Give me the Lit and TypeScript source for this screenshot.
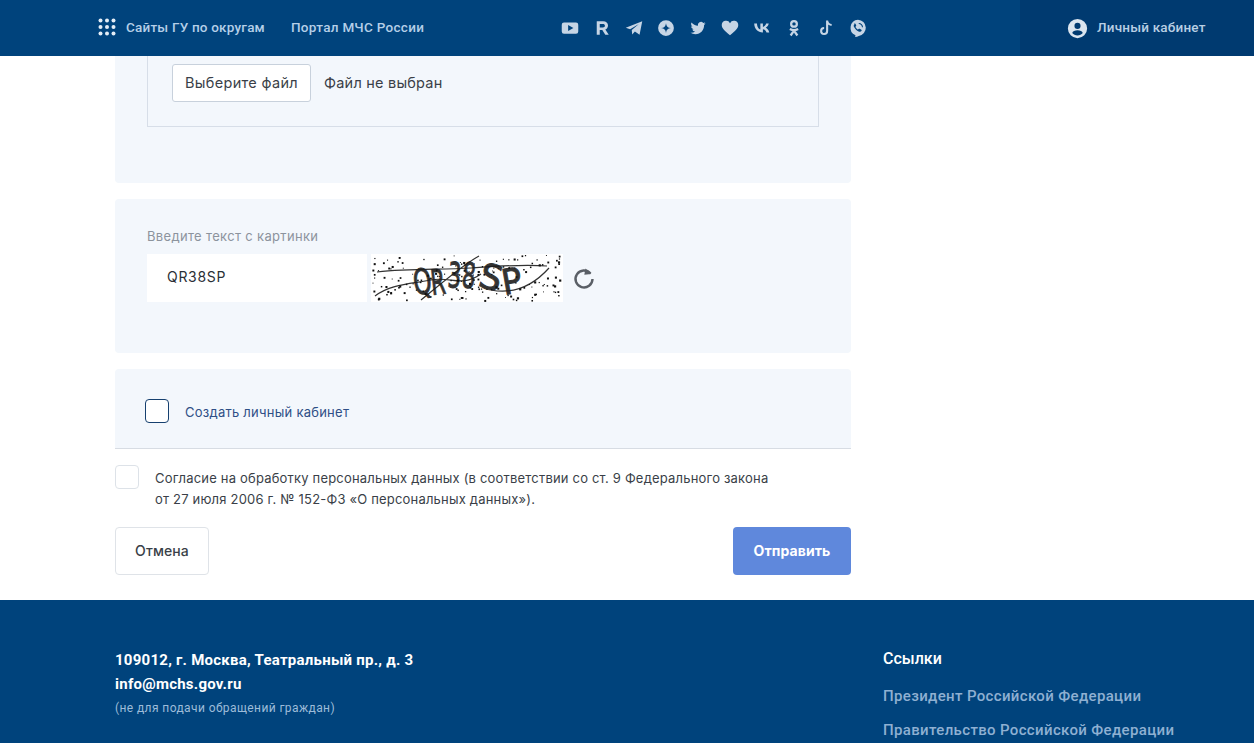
import { LitElement, html, css, svg } from "lit";
import { customElement } from "lit/decorators.js";

function rng(seed: number) {
  return () => {
    seed = (seed * 16807) % 2147483647;
    return seed / 2147483647;
  };
}
const r = rng(4242);
const dots = Array.from({ length: 170 }, () => ({
  x: 1 + r() * 189,
  y: 1 + r() * 45,
  s: 0.9 + r() * 1.300,
}));
const letters = [
  { c: "Q", x: 44, y: 41, a: -8, sx: 0.66 },
  { c: "R", x: 61, y: 41, a: -6, sx: 0.6 },
  { c: "3", x: 76, y: 33, a: 4, sx: 0.6 },
  { c: "8", x: 90, y: 33, a: 6, sx: 0.6 },
  { c: "S", x: 106, y: 32, a: 16, sx: 1 },
  { c: "P", x: 133, y: 41, a: -10, sx: 0.95 },
];

const icons = [
  svg`<path fill-rule="evenodd" d="M4 4.500h16a3 3 0 0 1 3 3v9a3 3 0 0 1-3 3H4a3 3 0 0 1-3-3v-9a3 3 0 0 1 3-3zM9.500 8v8l7-4z"/>`,
  svg`<path fill-rule="evenodd" d="M5 3h8.500c4 0 6.500 2.300 6.500 5.800 0 2.600-1.400 4.500-3.600 5.300L21 21h-4.600l-4-6.300H9V21H5zM9 6.600v4.600h4.200c1.600 0 2.700-.9 2.700-2.300s-1.100-2.300-2.700-2.300z"/>`,
  svg`<path d="M1 11.800 23 3l-3.600 18-6.200-4.400L9.600 20.500 9 14.700 18.500 6.500 6.800 13.800z"/>`,
  svg`<path fill-rule="evenodd" d="M12 1.500a10.500 10.500 0 1 1 0 21 10.500 10.500 0 0 1 0-21zM12 5.500c-.5 4.200-2.300 6-6.500 6.500 4.200.5 6 2.300 6.500 6.500.5-4.200 2.300-6 6.500-6.500-4.200-.5-6-2.300-6.500-6.500z"/>`,
  svg`<path transform="translate(2 2) scale(.84)" d="M23.953 4.570a10 10 0 0 1-2.825.775 4.958 4.958 0 0 0 2.163-2.723c-.951.555-2.005.959-3.127 1.184a4.920 4.920 0 0 0-8.384 4.482C7.690 8.095 4.067 6.130 1.640 3.162a4.822 4.822 0 0 0-.666 2.475c0 1.710.870 3.213 2.188 4.096a4.904 4.904 0 0 1-2.228-.616v.060a4.923 4.923 0 0 0 3.946 4.827 4.996 4.996 0 0 1-2.212.085 4.936 4.936 0 0 0 4.604 3.417 9.867 9.867 0 0 1-6.102 2.105c-.390 0-.779-.023-1.170-.067a13.995 13.995 0 0 0 7.557 2.209c9.053 0 13.998-7.496 13.998-13.985 0-.210 0-.420-.015-.630A9.935 9.935 0 0 0 24 4.590z"/>`,
  svg`<path d="M12 21.500C5 16 1 12.400 1 8a5.800 5.800 0 0 1 11-2.500A5.800 5.800 0 0 1 23 8c0 4.400-4 8-11 13.500z"/>`,
  svg`<path d="M13 18C6.500 18 1.800 13.400 1.600 6h3.700c.1 5.200 2.700 7.400 4.500 7.900V6h3.400v4.500c1.800-.2 3.700-2.200 4.400-4.500h3.400c-.5 2.800-2.600 4.800-4 5.700 1.400.7 3.800 2.500 4.700 6.300h-3.700c-.7-2.400-2.500-4.100-4.800-4.300V18z"/>`,
  svg`<g fill="none" stroke="currentColor" stroke-width="3"><circle cx="12" cy="6.500" r="3.800"/><path d="M6.500 13.200c3.500 2 7.500 2 11 0M12 15.500 7.500 22M12 15.500 16.500 22"/></g>`,
  svg`<path fill="none" stroke="currentColor" stroke-width="2.800" d="M13.500 2v14a4 4 0 1 1-4-4M13.500 2c.4 3.500 2.800 5.600 6 6"/>`,
  svg`<path fill-rule="evenodd" d="M12 1a10.800 10.800 0 0 1 1 21.500c-1.500 1-3 1.500-5 1.500.5-.7.6-1.500.6-2.300A10.800 10.800 0 0 1 12 1zM7.500 6.500c-1.500 1-1.500 2.800-.5 4.600 1.300 2.500 3.200 4.400 5.800 5.600 1.700.7 3.300.5 4-1 .3-.8-.2-1.300-.8-1.700l-1.700-1c-.6-.3-1.100-.1-1.500.4-.5.6-1 .6-1.700.1-1-.7-1.800-1.500-2.300-2.500-.3-.6-.2-1 .4-1.400.5-.4.700-.9.300-1.500l-1-1.800c-.3-.5-.9-.8-1.500-.5zM13 5.200v1.400c2.500 0 4.300 1.800 4.300 4.300h1.400c0-3.300-2.400-5.700-5.700-5.700z"/>`,
];

@customElement("app-root")
export class AppRoot extends LitElement {
  static styles = css`
    :host {
      display: block;
      height: 743px;
      overflow: hidden;
      background: #fff;
      font-family: "Inter", "Liberation Sans", sans-serif;
      color: #3a3f48;
    }
    * { box-sizing: border-box; }
    .hdr {
      height: 56px;
      background: #00437c;
      display: flex;
      align-items: center;
      padding-left: 98px;
      font-family: "Roboto", sans-serif;
      font-size: 13.500px;
      font-weight: 500;
      letter-spacing: .2px;
      color: #b5cfe8;
      white-space: nowrap;
    }
    .hdr span { padding-bottom: 2px; }
    .grid { width: 18px; height: 18px; margin: 0 10px 2px 0; fill: #e4edf6; flex: none; }
    .nav2 { margin-left: 26px; width: 270px; letter-spacing: .3px; }
    .soc { display: flex; gap: 14px; align-items: center; width: 440px; }
    .soc svg { width: 18px; height: 18px; fill: #c6d5e5; color: #c6d5e5; flex: none; }
    .cab {
      margin-left: auto;
      width: 234px;
      height: 56px;
      background: #003a70;
      display: flex;
      align-items: center;
      padding-left: 47px;
      gap: 9px;
      color: #b9cfe4;
    }
    .cab svg { width: 21px; height: 21px; flex: none; }
    .main { width: 736px; margin-left: 115px; display: flex; flex-direction: column; }
    .panel { background: #f3f7fc; border-radius: 4px; margin-bottom: 16px; }
    .p1 { height: 127px; padding: 0 32px; border-radius: 0 0 4px 4px; }
    .fbox {
      height: 71px;
      border: 1px solid #d7dee8;
      border-top: 0;
      padding: 8px 24px 0;
      display: flex;
      align-items: flex-start;
      gap: 13px;
      font-size: 14.500px;
      letter-spacing: .22px;
    }
    .fbtn {
      width: 139px;
      height: 38px;
      border: 1px solid #c8d1dc;
      border-radius: 3px;
      background: #fff;
      display: flex;
      align-items: center;
      justify-content: center;
      font: inherit;
      letter-spacing: .32px;
      color: #3a3f48;
      padding: 0 0 2px;
    }
    .fname { line-height: 38px; }
    .p2 { height: 154px; padding: 29px 32px 0; }
    .lbl { font-size: 13px; letter-spacing: .33px; color: #8c939d; line-height: 16px; margin-bottom: 10px; }
    .cap { display: flex; align-items: center; }
    .inp {
      width: 220px;
      height: 48px;
      background: #fff;
      padding: 0 0 3px 20px;
      display: flex;
      align-items: center;
      font-size: 14px;
      letter-spacing: .7px;
      color: #2b2f36;
      margin-right: 4px;
    }
    .capimg { width: 192px; height: 48px; background: #fff; display: block; }
    .ref { width: 24px; height: 24px; margin: 0 0 1px 9px; fill: none; stroke: #5a5f66; stroke-width: 2.400; }
    .p3 {
      height: 80px;
      margin-bottom: 16px;
      border-radius: 4px 4px 0 0;
      border-bottom: 1px solid #d7dce3;
      display: flex;
      align-items: center;
      padding: 4px 0 0 30px;
      gap: 16px;
      font-size: 13px;
      letter-spacing: .25px;
      color: #2f4f86;
    }
    .p3 span:last-child { padding-top: 2px; }
    .cb { width: 24px; height: 24px; border-radius: 4px; border: 1px solid #16406f; background: #fff; flex: none; display: block; }
    .cb.light { border-color: #dde2e8; }
    .cons {
      display: flex;
      gap: 16px;
      font-size: 13px;
      line-height: 21px;
      height: 62px;
      letter-spacing: .19px;
    }
    .cons p { margin: 3px 0 0; white-space: nowrap; }
    .btns { display: flex; justify-content: space-between; height: 48px; margin-bottom: 25px; }
    .btn {
      height: 48px;
      border-radius: 4px;
      font: inherit;
      font-size: 14px;
      letter-spacing: .1px;
      padding: 0 0 2px;
    }
    .cancel { width: 94px; border: 1px solid #dfe3e8; background: #fff; color: #3a3f48; font-weight: 500; }
    .send { width: 118px; border: 0; background: #5f88dc; color: #fff; font-weight: 700; }
    .foot {
      height: 143px;
      background: #00437c;
      display: flex;
      padding: 48px 0 0 115px;
      color: #fff;
      font-family: "Roboto", sans-serif;
    }
    .faddr { width: 768px; }
    .a1 { font-size: 15px; font-weight: 700; line-height: 24px; letter-spacing: .25px; }
    .a2 { font-size: 12px; line-height: 24px; color: #9dbcd9; letter-spacing: .4px; }
    .fh { font-size: 16px; font-weight: 500; line-height: 20px; padding-top: 1px; margin-bottom: 10px; }
    .fl { font-size: 15px; font-weight: 500; color: #8fb0d2; line-height: 34px; letter-spacing: .35px; }
  `;

  render() {
    return html`
      <header class="hdr">
        <svg class="grid" viewBox="0 0 18 18">
          ${[2.500, 9, 15.500].flatMap((y) => [2.500, 9, 15.500].map((x) => svg`<circle cx=${x} cy=${y} r="2"/>`))}
        </svg>
        <span>Сайты ГУ по округам</span>
        <span class="nav2">Портал МЧС России</span>
        <div class="soc">
          ${icons.map((i) => html`<svg viewBox="0 0 24 24">${i}</svg>`)}
        </div>
        <div class="cab">
          <svg viewBox="0 0 24 24">
            <path fill="#dbe5ef" fill-rule="evenodd" d="M12 1a11 11 0 1 1 0 22 11 11 0 0 1 0-22zM12 5.500a3.500 3.500 0 1 0 0 7 3.500 3.500 0 0 0 0-7zM12 14c-3 0-5.500 1.200-6 3.200 1.400 1.700 3.600 2.800 6 2.800s4.600-1.100 6-2.800c-.5-2-3-3.200-6-3.200z"/>
          </svg>
          <span>Личный кабинет</span>
        </div>
      </header>
      <main class="main">
        <section class="panel p1">
          <div class="fbox">
            <button class="fbtn">Выберите файл</button>
            <span class="fname">Файл не выбран</span>
          </div>
        </section>
        <section class="panel p2">
          <div class="lbl">Введите текст с картинки</div>
          <div class="cap">
            <div class="inp">QR38SP</div>
            <svg class="capimg" viewBox="0 0 192 48">
              <g fill="none" stroke="#333" stroke-width="1.200">
                <path d="M6 18C40 14 70 16 100 14S150 10 176 12"/>
                <path d="M4 42C20 30 40 30 60 26S90 34 110 20"/>
                <path d="M120 36c20 4 40-2 58-22"/>
                <path d="M50 46C70 30 90 12 108 2"/>
              </g>
              <g font-family="DejaVu Sans, sans-serif" font-size="35" fill="#1d1d1d" stroke="#1d1d1d" stroke-width="1" opacity=".9">
                ${letters.map(
                  (l) => svg`<text transform="translate(${l.x} ${l.y}) rotate(${l.a}) scale(${l.sx} 1)">${l.c}</text>`
                )}
              </g>
              <g fill="#111">
                ${dots.map((d) => svg`<rect x=${d.x} y=${d.y} width=${d.s} height=${d.s}/>`)}
              </g>
            </svg>
            <svg class="ref" viewBox="0 0 24 24">
              <path d="M18.500 7.500A8.500 8.500 0 1 0 20.500 13"/>
              <path d="M13.500 2.500l5.800 5.500-7 .8" fill="#5a5f66" stroke="none"/>
            </svg>
          </div>
        </section>
        <section class="panel p3">
          <span class="cb"></span>
          <span>Создать личный кабинет</span>
        </section>
        <div class="cons">
          <span class="cb light"></span>
          <p>Согласие на обработку персональных данных (в соответствии со ст. 9 Федерального закона<br />от 27 июля 2006 г. № 152-ФЗ «О персональных данных»).</p>
        </div>
        <div class="btns">
          <button class="btn cancel">Отмена</button>
          <button class="btn send">Отправить</button>
        </div>
      </main>
      <footer class="foot">
        <div class="faddr">
          <div class="a1">109012, г. Москва, Театральный пр., д. 3</div>
          <div class="a1">info@mchs.gov.ru</div>
          <div class="a2">(не для подачи обращений граждан)</div>
        </div>
        <div>
          <div class="fh">Ссылки</div>
          <div class="fl">Президент Российской Федерации</div>
          <div class="fl">Правительство Российской Федерации</div>
        </div>
      </footer>
    `;
  }
}
